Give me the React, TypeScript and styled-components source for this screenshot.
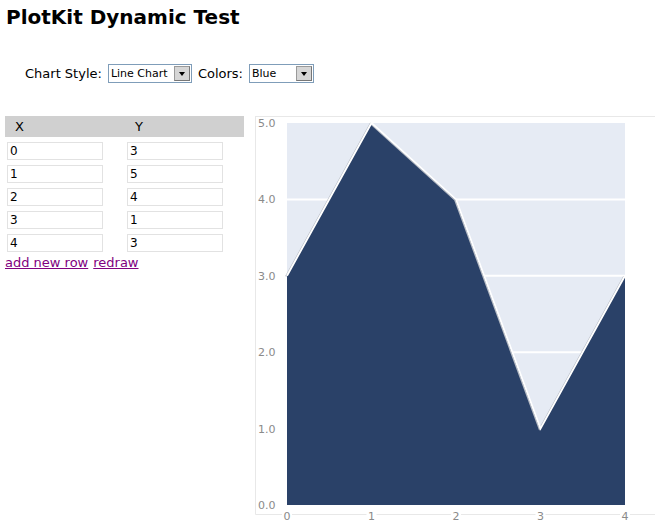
import React from "react";
import styled, { createGlobalStyle } from "styled-components";

const Global = createGlobalStyle`
  body {
    margin: 5px;
    font-family: "DejaVu Sans", Verdana, sans-serif;
    font-size: 13px;
    color: #000;
    background: #fff;
  }
`;

const Title = styled.h1`
  margin: 0 0 0 1px;
  font-size: 20px;
  font-weight: bold;
  line-height: 24px;
`;

const Controls = styled.div`
  display: flex;
  align-items: center;
  gap: 6px;
  margin: 35px 0 0 20px;
  height: 19px;
`;

const Label = styled.span`
  font-size: 13px;
`;

const SelectBox = styled.div<{ $w: number }>`
  display: flex;
  align-items: center;
  justify-content: space-between;
  box-sizing: border-box;
  width: ${(p) => p.$w}px;
  height: 19px;
  border: 1px solid #7f9db9;
  background: #fff;
  padding: 1px 1px 1px 2px;
  font-size: 11px;
`;

const Arrow = styled.span`
  display: flex;
  align-items: center;
  justify-content: center;
  box-sizing: border-box;
  width: 16px;
  height: 15px;
  background: #d6d6d6;
  border: 1px solid #9a9a9a;
  border-right-color: #777;
  border-bottom-color: #777;
  &::after {
    content: "";
    border-left: 3px solid transparent;
    border-right: 3px solid transparent;
    border-top: 4px solid #000;
  }
`;

const Main = styled.div`
  display: flex;
  align-items: flex-start;
  margin-top: 33px;
`;

const Left = styled.div`
  width: 239px;
  margin-right: 11px;
`;

const Header = styled.div`
  display: grid;
  grid-template-columns: 120px 119px;
  height: 21px;
  align-items: center;
  background: #d0d0d0;
  font-size: 13px;
`;

const HeaderCell = styled.span<{ $pad: number }>`
  padding-left: ${(p) => p.$pad}px;
`;

const Row = styled.div`
  display: grid;
  grid-template-columns: 120px 119px;
  margin-top: 5px;
  &:first-of-type {
    margin-top: 2px;
  }
`;

const Field = styled.input`
  box-sizing: border-box;
  width: 96px;
  height: 18px;
  margin-left: 2px;
  border: 1px solid #e2e2e2;
  padding: 0 2px;
  font-family: "DejaVu Sans", Verdana, sans-serif;
  font-size: 12px;
  color: #000;
  outline: none;
`;

const Links = styled.div`
  margin-top: 3px;
  display: flex;
  gap: 5px;
  font-size: 13px;
`;

const Link = styled.a`
  color: #800080;
  text-decoration: underline;
  cursor: pointer;
`;

const ChartWrap = styled.div`
  width: 402px;
  height: 408px;
`;

const data = [3, 5, 4, 1, 3];

const Chart: React.FC = () => {
  const L = 32, T = 7, R = 370, B = 389;
  const xs = (i: number) => L + ((R - L) * i) / 4;
  const ys = (v: number) => B - ((B - T) * v) / 5;
  const pts = data.map((v, i) => `${xs(i)},${ys(v)}`).join(" ");
  const area = `${L},${B} ${pts} ${R},${B}`;
  const grid = [1, 2, 3, 4];
  const yl = [0, 1, 2, 3, 4, 5];
  const font = "DejaVu Sans, Verdana, sans-serif";
  return (
    <svg width="402" height="408" viewBox="0 0 402 408" style={{ display: "block" }}>
      <polyline points="0.5,0 0.5,398.5 401.5,398.5 401.5,0.5 0.5,0.5" fill="none" stroke="#e8e8e8" strokeWidth="1" />
      <rect x={L} y={T} width={R - L} height={B - T} fill="#e6ebf4" />
      {grid.map((g) => (
        <line key={g} x1={L} x2={R} y1={ys(g)} y2={ys(g)} stroke="#fff" strokeWidth="2" />
      ))}
      <polygon points={area} fill="#2a4168" />
      <polyline points={data.map((v, i) => `${xs(i) - 1.2},${ys(v) + 0.6}`).join(" ")} fill="none" stroke="#b4b9c2" strokeWidth="1.3" />
      <polyline points={pts} fill="none" stroke="#ffffff" strokeWidth="1.8" />
      {yl.map((v) => (
        <g key={v}>
          <rect x="2" y={ys(v) - 6} width="23" height="11" fill="#fff" />
          <text x="3" y={ys(v) + 4} fontFamily={font} fontSize="11" fill="#8a8a8a">
            {v.toFixed(1)}
          </text>
        </g>
      ))}
      {data.map((_, i) => (
        <g key={i}>
          <rect x={xs(i) - 5} y={394} width="10" height="10" fill="#fff" />
          <text x={xs(i)} y={404} textAnchor="middle" fontFamily={font} fontSize="11" fill="#8a8a8a">
            {i}
          </text>
        </g>
      ))}
    </svg>
  );
};

export default function App() {
  return (
    <>
      <Global />
      <Title>PlotKit Dynamic Test</Title>
      <Controls>
        <Label>Chart Style:</Label>
        <SelectBox $w={84}>
          <span>Line Chart</span>
          <Arrow />
        </SelectBox>
        <Label>Colors:</Label>
        <SelectBox $w={65}>
          <span>Blue</span>
          <Arrow />
        </SelectBox>
      </Controls>
      <Main>
        <Left>
          <Header>
            <HeaderCell $pad={10}>X</HeaderCell>
            <HeaderCell $pad={10}>Y</HeaderCell>
          </Header>
          {data.map((v, i) => (
            <Row key={i}>
              <Field defaultValue={String(i)} />
              <Field defaultValue={String(v)} />
            </Row>
          ))}
          <Links>
            <Link>add new row</Link>
            <Link>redraw</Link>
          </Links>
        </Left>
        <ChartWrap>
          <Chart />
        </ChartWrap>
      </Main>
    </>
  );
}
